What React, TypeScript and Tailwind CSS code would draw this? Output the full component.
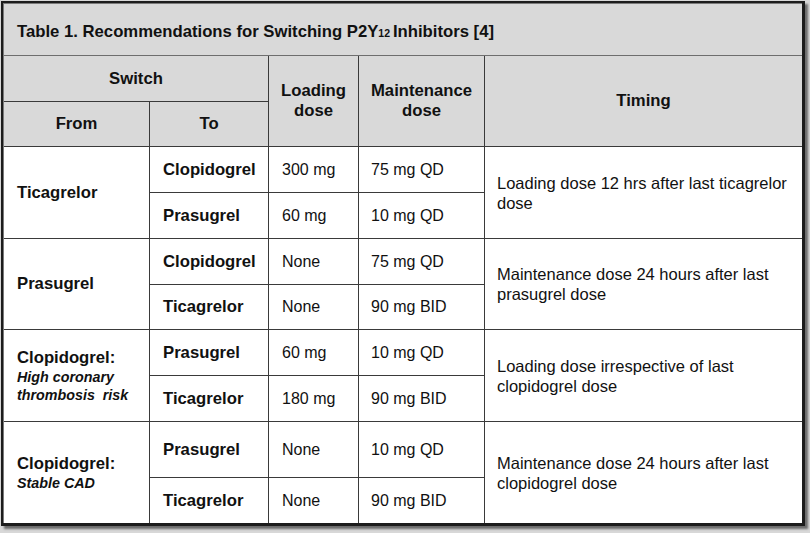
import React from "react";

const bold = "font-bold text-[16.7px] leading-[20px]";
const head = "bg-[#d9d9d9] flex items-center justify-center text-center " + bold;
const cell = "bg-white flex items-center";

type Row = { to: string; load: string; maint: string };
type Group = { from: React.ReactNode; rows: [Row, Row]; timing: React.ReactNode };

const groups: Group[] = [
  {
    from: <span className={bold}>Ticagrelor</span>,
    rows: [
      { to: "Clopidogrel", load: "300 mg", maint: "75 mg QD" },
      { to: "Prasugrel", load: "60 mg", maint: "10 mg QD" },
    ],
    timing: (
      <>
        Loading dose 12 hrs after last ticagrelor
        <br />
        dose
      </>
    ),
  },
  {
    from: <span className={bold}>Prasugrel</span>,
    rows: [
      { to: "Clopidogrel", load: "None", maint: "75 mg QD" },
      { to: "Ticagrelor", load: "None", maint: "90 mg BID" },
    ],
    timing: (
      <>
        Maintenance dose 24 hours after last
        <br />
        prasugrel dose
      </>
    ),
  },
  {
    from: (
      <div className="flex flex-col">
        <span className={bold}>Clopidogrel:</span>
        <span className="font-bold italic text-[14.3px] leading-[18px]">High coronary</span>
        <span className="font-bold italic text-[14.3px] leading-[18px] whitespace-pre">thrombosis  risk</span>
      </div>
    ),
    rows: [
      { to: "Prasugrel", load: "60 mg", maint: "10 mg QD" },
      { to: "Ticagrelor", load: "180 mg", maint: "90 mg BID" },
    ],
    timing: (
      <>
        Loading dose irrespective of last
        <br />
        clopidogrel dose
      </>
    ),
  },
  {
    from: (
      <div className="flex flex-col">
        <span className={bold}>Clopidogrel:</span>
        <span className="font-bold italic text-[14.3px] leading-[18px]">Stable CAD</span>
      </div>
    ),
    rows: [
      { to: "Prasugrel", load: "None", maint: "10 mg QD" },
      { to: "Ticagrelor", load: "None", maint: "90 mg BID" },
    ],
    timing: (
      <>
        Maintenance dose 24 hours after last
        <br />
        clopidogrel dose
      </>
    ),
  },
];

export default function App() {
  return (
    <div className="w-[810px] h-[533px] bg-[#d8d8d8] pt-px pl-px font-['Liberation_Sans',Arial,sans-serif] text-[#111]">
      <div className="w-[804px] h-[525px] border-l-2 border-t-2 border-r-[3px] border-b-[3px] border-[#1c1c1c] bg-white shadow-[3px_3px_2px_rgba(0,0,0,0.5)]">
        <div className="w-[799px] h-[520px] border-l border-t border-[#7a7a7a] flex flex-col">
          <div className="h-[52px] bg-[#d9d9d9] border-b border-[#6e6e6e] flex items-center pl-[13px] pt-[5px] font-bold text-[16.7px]">
            <span>
              Table 1. Recommendations for Switching P2Y
              <span className="text-[10.5px]">12 </span>
              Inhibitors [4]
            </span>
          </div>
          <div className="grid grid-cols-[145px_118px_89px_125px_317px] grid-rows-[45px_44px_45px_45px_45px_44px_45px_45px_55px_45px] gap-px bg-[#3a3a3a]">
            <div className={head + " col-span-2"}>Switch</div>
            <div className={head + " row-span-2"}>
              Loading
              <br />
              dose
            </div>
            <div className={head + " row-span-2"}>
              Maintenance
              <br />
              dose
            </div>
            <div className={head + " row-span-2"}>Timing</div>
            <div className={head}>From</div>
            <div className={head}>To</div>
            {groups.map((g, gi) => (
              <React.Fragment key={gi}>
                <div className={cell + " row-span-2 pl-[13px]"}>{g.from}</div>
                <div className={cell + " pl-[13px] " + bold}>{g.rows[0].to}</div>
                <div className={cell + " pl-[13px] text-[16px]"}>{g.rows[0].load}</div>
                <div className={cell + " pl-[12px] text-[16px]"}>{g.rows[0].maint}</div>
                <div className={cell + " row-span-2 pl-[12px] text-[16.5px] leading-[20px]"}>
                  <div>{g.timing}</div>
                </div>
                <div className={cell + " pl-[13px] " + bold}>{g.rows[1].to}</div>
                <div className={cell + " pl-[13px] text-[16px]"}>{g.rows[1].load}</div>
                <div className={cell + " pl-[12px] text-[16px]"}>{g.rows[1].maint}</div>
              </React.Fragment>
            ))}
          </div>
        </div>
      </div>
    </div>
  );
}
